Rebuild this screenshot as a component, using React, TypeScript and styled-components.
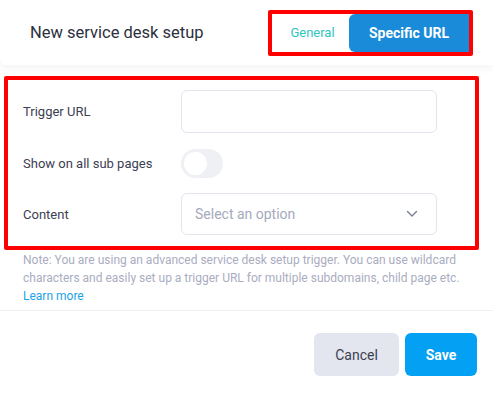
import React, { useState } from 'react';
import styled, { createGlobalStyle } from 'styled-components';

const GlobalStyle = createGlobalStyle`
  body {
    margin: 0;
    background: #ffffff;
    font-family: Roboto, "Liberation Sans", sans-serif;
  }
`;

type TabName = 'general' | 'specific';

function App() {
  const [tab, setTab] = useState<TabName>('specific');
  const [subPages, setSubPages] = useState(false);

  return (
    <>
      <GlobalStyle />
      <Modal>
        <Header>
          <Title>New service desk setup</Title>
          <Highlight>
            <Tab active={tab === 'general'} onClick={() => setTab('general')}>
              General
            </Tab>
            <Tab active={tab === 'specific'} onClick={() => setTab('specific')}>
              Specific URL
            </Tab>
          </Highlight>
        </Header>

        <Body>
          <FormBox>
            <Row>
              <Label>Trigger URL</Label>
              <TextInput type="text" />
            </Row>
            <Row>
              <Label>Show on all sub pages</Label>
              <Toggle on={subPages} onClick={() => setSubPages(!subPages)}>
                <Knob on={subPages} />
              </Toggle>
            </Row>
            <Row>
              <Label>Content</Label>
              <Select>
                <Placeholder>Select an option</Placeholder>
                <svg width="12" height="8" viewBox="0 0 12 8">
                  <path
                    d="M1.5 1.5 L6 6 L10.5 1.5"
                    fill="none"
                    stroke="#7a7e92"
                    strokeWidth="1.4"
                    strokeLinecap="round"
                    strokeLinejoin="round"
                  />
                </svg>
              </Select>
            </Row>
          </FormBox>
          <Note>
            Note: You are using an advanced service desk setup trigger. You can use wildcard
            characters and easily set up a trigger URL for multiple subdomains, child page etc.
            <br />
            <LearnMore href="#">Learn more</LearnMore>
          </Note>
        </Body>

        <Footer>
          <Button kind="secondary">Cancel</Button>
          <Button kind="primary">Save</Button>
        </Footer>
      </Modal>
    </>
  );
}

const Modal = styled.div`
  width: 493px;
  height: 393px;
  background: #ffffff;
  overflow: hidden;
`;

const Header = styled.div`
  position: relative;
  z-index: 1;
  height: 65px;
  display: flex;
  align-items: center;
  justify-content: space-between;
  padding: 0 20px 0 30px;
  background: #ffffff;
  border-bottom-left-radius: 6px;
  box-shadow: 0 3px 10px rgba(40, 50, 90, 0.06);
`;

const Title = styled.h1`
  margin: 0;
  font-size: 16.5px;
  font-weight: 400;
  color: #2b2f3e;
`;

const Highlight = styled.div`
  display: flex;
  height: 38px;
  border: 4px solid #ff0000;
  border-radius: 2px;
`;

const Tab = styled.button<{ active: boolean }>`
  border: none;
  padding: ${({ active }) => (active ? '0' : '0 0 0 4px')};
  cursor: pointer;
  font-family: inherit;
  width: ${({ active }) => (active ? '120px' : '77px')};
  background: ${({ active }) => (active ? '#1a8bd9' : '#ffffff')};
  color: ${({ active }) => (active ? '#ffffff' : '#2fc5bf')};
  font-size: ${({ active }) => (active ? '14px' : '13px')};
  font-weight: ${({ active }) => (active ? 700 : 400)};
  border-radius: ${({ active }) => (active ? '6px 0 0 6px' : '0')};
`;

const Body = styled.div`
  padding: 11px 14px 5px 4px;
  border-bottom: 1px solid #eef0f4;
`;

const FormBox = styled.div`
  display: flex;
  flex-direction: column;
  gap: 15px;
  padding: 10px 37px 11px 15px;
  border: 4px solid #ff0000;
  border-radius: 2px;
`;

const Row = styled.div`
  display: grid;
  grid-template-columns: 158px 256px;
  align-items: center;
`;

const Label = styled.label`
  font-size: 13px;
  font-weight: 400;
  color: #3c4052;
`;

const TextInput = styled.input`
  box-sizing: border-box;
  height: 43px;
  width: 256px;
  border: 1px solid #e3e4ee;
  border-radius: 6px;
  outline: none;
  background: #ffffff;
`;

const Toggle = styled.div<{ on: boolean }>`
  box-sizing: border-box;
  width: 42px;
  height: 29px;
  margin-top: 1px;
  padding: 3px;
  border-radius: 15px;
  background: ${({ on }) => (on ? '#1a8bd9' : '#eef0f4')};
  display: flex;
  justify-content: ${({ on }) => (on ? 'flex-end' : 'flex-start')};
  align-items: center;
  cursor: pointer;
`;

const Knob = styled.span<{ on: boolean }>`
  width: 23px;
  height: 23px;
  border-radius: 50%;
  background: #ffffff;
`;

const Select = styled.div`
  box-sizing: border-box;
  height: 42px;
  display: flex;
  align-items: center;
  justify-content: space-between;
  padding: 0 18px 0 13px;
  border: 1px solid #e3e4ee;
  border-radius: 6px;
  cursor: pointer;
`;

const Placeholder = styled.span`
  font-size: 14px;
  color: #a5a9bc;
`;

const Note = styled.p`
  margin: 1px 0 0;
  padding: 0 0 0 19px;
  font-size: 12px;
  line-height: 18px;
  color: #a9adbf;
`;

const LearnMore = styled.a`
  color: #1ba3e6;
  text-decoration: none;
`;

const Footer = styled.div`
  display: flex;
  justify-content: flex-end;
  gap: 6px;
  padding: 22px 16px 0 0;
`;

const Button = styled.button<{ kind: 'primary' | 'secondary' }>`
  height: 43px;
  border: none;
  border-radius: 6px;
  font-family: inherit;
  font-size: 14px;
  cursor: pointer;
  width: ${({ kind }) => (kind === 'primary' ? '72px' : '85px')};
  background: ${({ kind }) => (kind === 'primary' ? '#03a0f4' : '#e3e5ef')};
  color: ${({ kind }) => (kind === 'primary' ? '#ffffff' : '#3b3f50')};
  font-weight: ${({ kind }) => (kind === 'primary' ? 700 : 400)};
`;

export default App;
